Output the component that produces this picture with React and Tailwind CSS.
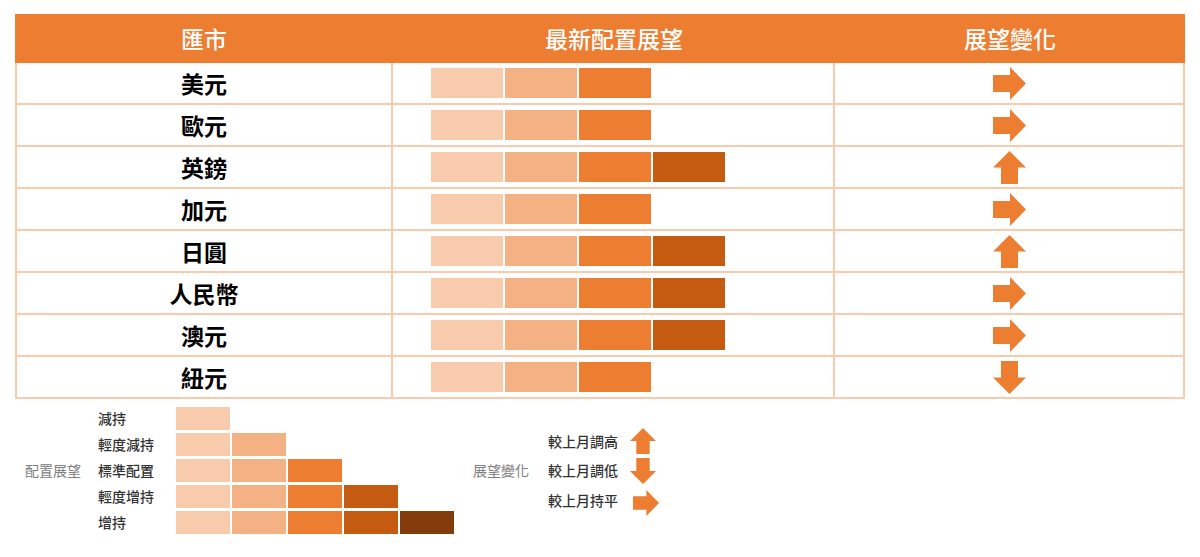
import React from "react";

const SEG = ["bg-[#F8CBAD]", "bg-[#F4B183]", "bg-[#ED7D31]", "bg-[#C55A11]", "bg-[#843C0C]"];

const rows = [
  { name: "美元", n: 3, dir: "right" },
  { name: "歐元", n: 3, dir: "right" },
  { name: "英鎊", n: 4, dir: "up" },
  { name: "加元", n: 3, dir: "right" },
  { name: "日圓", n: 4, dir: "up" },
  { name: "人民幣", n: 4, dir: "right" },
  { name: "澳元", n: 4, dir: "right" },
  { name: "紐元", n: 3, dir: "down" },
];

function Arrow({ dir, className }) {
  const d = {
    right: "M0 8 H17 V0 L33 16.5 L17 33 V25 H0 Z",
    up: "M16.5 0 L33 16.5 H25 V33 H8 V16.5 H0 Z",
    down: "M8 0 H25 V16.5 H33 L16.5 33 L0 16.5 H8 Z",
  }[dir];
  return (
    <svg viewBox="0 0 33 33" className={className}>
      <path d={d} fill="#ED7D31" />
    </svg>
  );
}

const font = { fontFamily: '"Noto Sans CJK TC", "Noto Sans", sans-serif' };

export default function App() {
  return (
    <div className="w-[1200px] h-[557px] bg-white pt-[14px]" style={font}>
      <div className="ml-[15px] w-[1170px]">
        {/* header */}
        <div className="grid grid-cols-[378px_442px_350px] h-[49px] bg-[#ED7D31] text-white text-[23px] font-medium">
          <div className="flex items-center justify-center">匯市</div>
          <div className="flex items-center justify-center">最新配置展望</div>
          <div className="flex items-center justify-center">展望變化</div>
        </div>
        {/* body */}
        <div className="border-l-2 border-r-2 border-[#F8CBAD]">
          {rows.map((r) => (
            <div
              key={r.name}
              className="grid grid-cols-[376px_442px_348px] h-[42px] border-b-2 border-[#F8CBAD]"
            >
              <div className="flex items-center justify-center border-r-2 border-[#F8CBAD] text-[23px] font-bold text-black">
                {r.name}
              </div>
              <div className="flex items-center pl-[38px] gap-[2px] border-r-2 border-[#F8CBAD]">
                {SEG.slice(0, r.n).map((c, i) => (
                  <div key={i} className={`w-[72px] h-[30px] ${c}`} />
                ))}
              </div>
              <div className="flex items-center justify-center">
                <Arrow dir={r.dir} className="w-[33px] h-[33px]" />
              </div>
            </div>
          ))}
        </div>
      </div>

      {/* legends */}
      <div className="flex items-center mt-[8px] ml-[25px]">
        <div className="flex items-center">
          <div className="w-[73px] text-[14px] text-[#808080]">配置展望</div>
          <div className="flex flex-col gap-[3px]">
            {["減持", "輕度減持", "標準配置", "輕度增持", "增持"].map((l, i) => (
              <div key={l} className="flex items-center h-[23px]">
                <div className="w-[78px] text-[14px] text-[#333333] font-medium">{l}</div>
                <div className="flex gap-[2px]">
                  {SEG.slice(0, i + 1).map((c, j) => (
                    <div key={j} className={`w-[54px] h-[23px] ${c}`} />
                  ))}
                </div>
              </div>
            ))}
          </div>
        </div>
        <div className="flex items-center ml-[19px]">
          <div className="w-[75px] text-[14px] text-[#808080]">展望變化</div>
          <div className="flex flex-col">
            {[
              ["較上月調高", "up"],
              ["較上月調低", "down"],
              ["較上月持平", "right"],
            ].map(([l, d]) => (
              <div key={l} className="flex items-center h-[29.5px]">
                <div className="w-[82px] text-[14px] text-[#333333] font-medium">{l}</div>
                <Arrow dir={d} className={d === "right" ? "w-[26px] h-[26px] ml-[3px] mt-[6px]" : "w-[26px] h-[26px]"} />
              </div>
            ))}
          </div>
        </div>
      </div>
    </div>
  );
}
